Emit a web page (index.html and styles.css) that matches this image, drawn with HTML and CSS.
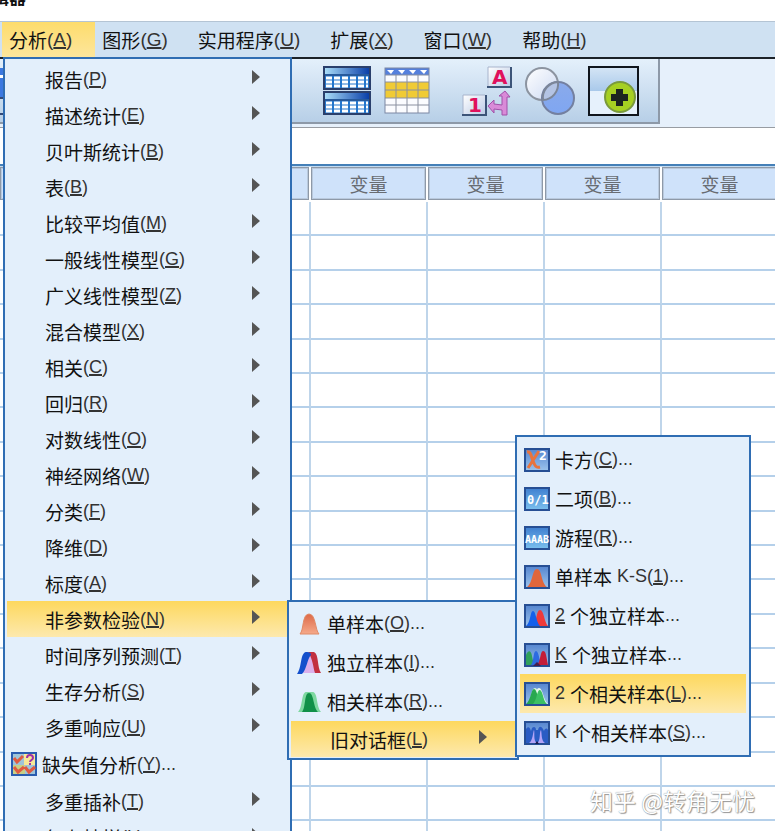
FILE: index.html
```html
<!DOCTYPE html>
<html lang="zh-CN">
<head>
  <meta charset="UTF-8">
  <meta name="viewport" content="width=device-width, initial-scale=1.0">
  <title>数据编辑器</title>
  <link rel="stylesheet" href="styles.css">
</head>
<body>
  <!-- 图标共用的渐变 -->
  <svg class="defs" width="0" height="0" aria-hidden="true">
    <defs>
      <linearGradient id="gBar"><stop offset="0" stop-color="#a9dcf8"/><stop offset="1" stop-color="#0a3fa8"/></linearGradient>
      <linearGradient id="gFrame" x2="0" y2="1"><stop offset="0" stop-color="#5585cf"/><stop offset="1" stop-color="#9cc4ec"/></linearGradient>
      <linearGradient id="gText" x2="0" y2="1"><stop offset="0" stop-color="#3f7fd0"/><stop offset="1" stop-color="#7cc0ee"/></linearGradient>
      <linearGradient id="gOrange" x2="0" y2="1"><stop offset="0" stop-color="#dd6a48"/><stop offset="1" stop-color="#f5a98a"/></linearGradient>
      <linearGradient id="gCard" x2="1" y2="1"><stop offset="0" stop-color="#ffffff"/><stop offset="1" stop-color="#bccbe6"/></linearGradient>
      <linearGradient id="gBall" x2="1" y2="1"><stop offset="0" stop-color="#ffffff"/><stop offset="1" stop-color="#ccd9f2"/></linearGradient>
      <linearGradient id="gBlue" x2="0" y2="1"><stop offset="0" stop-color="#8aaaea"/><stop offset="1" stop-color="#7fa6f2"/></linearGradient>
      <linearGradient id="gPane" x2="0" y2="1"><stop offset="0" stop-color="#d3e4f5"/><stop offset="1" stop-color="#a9c9ea"/></linearGradient>
    </defs>
  </svg>

  <div class="app">
    <header class="titlebar"><span>辑器</span></header>

    <!-- 菜单栏 -->
    <nav class="menubar">
      <button class="menubar-item open">分析<span class="key">(<u>A</u>)</span></button>
      <button class="menubar-item">图形<span class="key">(<u>G</u>)</span></button>
      <button class="menubar-item">实用程序<span class="key">(<u>U</u>)</span></button>
      <button class="menubar-item">扩展<span class="key">(<u>X</u>)</span></button>
      <button class="menubar-item">窗口<span class="key">(<u>W</u>)</span></button>
      <button class="menubar-item">帮助<span class="key">(<u>H</u>)</span></button>

      <!-- 分析菜单 -->
      <ul class="menu menu-main">
        <li><button class="item sub">报告<span class="key">(<u>P</u>)</span></button></li>
        <li><button class="item sub">描述统计<span class="key">(<u>E</u>)</span></button></li>
        <li><button class="item sub">贝叶斯统计<span class="key">(<u>B</u>)</span></button></li>
        <li><button class="item sub">表<span class="key">(<u>B</u>)</span></button></li>
        <li><button class="item sub">比较平均值<span class="key">(<u>M</u>)</span></button></li>
        <li><button class="item sub">一般线性模型<span class="key">(<u>G</u>)</span></button></li>
        <li><button class="item sub">广义线性模型<span class="key">(<u>Z</u>)</span></button></li>
        <li><button class="item sub">混合模型<span class="key">(<u>X</u>)</span></button></li>
        <li><button class="item sub">相关<span class="key">(<u>C</u>)</span></button></li>
        <li><button class="item sub">回归<span class="key">(<u>R</u>)</span></button></li>
        <li><button class="item sub">对数线性<span class="key">(<u>O</u>)</span></button></li>
        <li><button class="item sub">神经网络<span class="key">(<u>W</u>)</span></button></li>
        <li><button class="item sub">分类<span class="key">(<u>F</u>)</span></button></li>
        <li><button class="item sub">降维<span class="key">(<u>D</u>)</span></button></li>
        <li><button class="item sub">标度<span class="key">(<u>A</u>)</span></button></li>
        <li>
          <button class="item sub active">非参数检验<span class="key">(<u>N</u>)</span></button>
          <!-- 非参数检验 -->
          <ul class="menu menu-nonpar">
            <li><button class="item">
              <svg class="icon" width="24" height="24" viewBox="0 0 24 24"><path d="M3 22C7 18 5 2 12 2s6 16 10 20z" fill="url(#gOrange)" stroke="#e08a66"/></svg>
              单样本<span class="key">(<u>O</u>)...</span></button></li>
            <li><button class="item">
              <svg class="icon" width="24" height="24" viewBox="0 0 24 24"><path d="M6 22C9 16 9 5 13 5s4 12 7 17z" fill="#dcb0ea"/><path d="M11 1h6c5 2 3 15 7 21h-6C16 16 16 8 11 1z" fill="#c23040"/><path d="M0 23C5 17 3 2 9 1c4 0 5 1 5 3-4 4-4 14-9 19z" fill="#1450cc"/></svg>
              独立样本<span class="key">(<u>I</u>)...</span></button></li>
            <li><button class="item">
              <svg class="icon" width="24" height="24" viewBox="0 0 24 24"><path d="M1 22C6 17 4 3 9 2h7c5 1 3 14 8 20z" fill="#7ed8a0"/><path d="M5 22C9 17 7 3 12 3s4 14 9 19z" fill="#119048"/></svg>
              相关样本<span class="key">(<u>R</u>)...</span></button></li>
            <li>
              <button class="item sub last active">旧对话框<span class="key">(<u>L</u>)</span></button>
              <!-- 旧对话框 -->
              <ul class="menu menu-legacy">
                <li><button class="item">
                  <svg class="icon" width="26" height="24" viewBox="0 0 26 24"><rect x="1" y="1" width="24" height="22" fill="url(#gFrame)" stroke="#274f94" stroke-width="2"/><path d="M3 4c4-1 4 4 6 9s3 7 7 6M15 3L4 20" stroke="#e8743e" stroke-width="3" fill="none"/><text x="15" y="12" class="icon-text" font-size="13">2</text></svg>
                  卡方<span class="key">(<u>C</u>)...</span></button></li>
                <li><button class="item">
                  <svg class="icon" width="26" height="24" viewBox="0 0 26 24"><rect x="1" y="1" width="24" height="22" fill="url(#gText)" stroke="#274f94" stroke-width="2"/><text x="3" y="17" class="icon-text" font-size="12">0/1</text></svg>
                  二项<span class="key">(<u>B</u>)...</span></button></li>
                <li><button class="item">
                  <svg class="icon" width="26" height="24" viewBox="0 0 26 24"><rect x="1" y="1" width="24" height="22" fill="url(#gText)" stroke="#274f94" stroke-width="2"/><text x="1" y="17" class="icon-text" font-size="10">AAAB</text></svg>
                  游程<span class="key">(<u>R</u>)...</span></button></li>
                <li><button class="item">
                  <svg class="icon" width="26" height="24" viewBox="0 0 26 24"><rect x="1" y="1" width="24" height="22" fill="url(#gFrame)" stroke="#274f94" stroke-width="2"/><path d="M3 22C9 18 8 4 13 4s4 14 10 18z" fill="#e0663c"/></svg>
                  单样本<span class="key"> K-S(<u>1</u>)...</span></button></li>
                <li><button class="item">
                  <svg class="icon" width="26" height="24" viewBox="0 0 26 24"><rect x="1" y="1" width="24" height="22" fill="url(#gFrame)" stroke="#274f94" stroke-width="2"/><path d="M9 22C13 18 12 6 16 6s4 12 8 16z" fill="#ee3a3a"/><path d="M2 22C7 18 6 7 9 7s3 11 7 15z" fill="#1560ea"/></svg>
                  <span class="key"><u>2</u> </span>个独立样本<span class="key">...</span></button></li>
                <li><button class="item">
                  <svg class="icon" width="26" height="24" viewBox="0 0 26 24"><rect x="1" y="1" width="24" height="22" fill="url(#gFrame)" stroke="#274f94" stroke-width="2"/><path d="M2 22V12c2-5 5-5 6 1l2 9z" fill="#2fa05c"/><path d="M7 22C10 18 9 8 12 8s3 10 6 14z" fill="#2c6be0"/><path d="M13 22C17 18 16 8 19 8s3 4 5 14z" fill="#c41d38"/><path d="M9 23l4-4 4 4z" fill="#402050"/></svg>
                  <span class="key"><u>K</u> </span>个独立样本<span class="key">...</span></button></li>
                <li><button class="item active">
                  <svg class="icon" width="26" height="24" viewBox="0 0 26 24"><rect x="1" y="1" width="24" height="22" fill="url(#gFrame)" stroke="#274f94" stroke-width="2"/><path d="M3 22C8 17 7 6 11 6s4 12 8 16z" fill="#d8f4e0"/><path d="M8 22C12 17 11 6 15 6s4 12 9 16z" fill="#e8faec"/><path d="M2 22C7 18 7 7 10 7s4 11 7 15z" fill="#28a850"/><path d="M9 22C13 18 13 7 16 8s3 11 7 14z" fill="#3cc064"/></svg>
                  <span class="key">2 </span>个相关样本<span class="key">(<u>L</u>)...</span></button></li>
                <li><button class="item">
                  <svg class="icon" width="26" height="24" viewBox="0 0 26 24"><rect x="1" y="1" width="24" height="22" fill="url(#gFrame)" stroke="#274f94" stroke-width="2"/><path d="M2 22V8c2-3 4-2 5 2l1-3c2-2 4-1 4 2h2c1-4 3-4 5-1l1 2c1-3 3-3 4-1v13z" fill="#2a5cc4"/><path d="M5 22c4-2 4-12 5-13 1 3-1 11 3 13zM13 22c4-2 2-11 4-13 1 3 0 11 4 13z" fill="#b4a4f6"/><path d="M11 23l2-3 2 3z" fill="#1a1c50"/></svg>
                  <span class="key">K </span>个相关样本<span class="key">(<u>S</u>)...</span></button></li>
              </ul>
            </li>
          </ul>
        </li>
        <li><button class="item sub">时间序列预测<span class="key">(<u>T</u>)</span></button></li>
        <li><button class="item sub">生存分析<span class="key">(<u>S</u>)</span></button></li>
        <li><button class="item sub">多重响应<span class="key">(<u>U</u>)</span></button></li>
        <li><button class="item with-icon">
          <svg class="icon" width="26" height="24" viewBox="0 0 26 24"><rect x="1" y="1" width="24" height="22" fill="#9fc4d8" stroke="#2a5cb0" stroke-width="2"/><rect x="13" y="2" width="11" height="11" fill="#f8e896"/><path d="M2 13h12v9H2z" fill="#c8cf86"/><path d="M3 6l3 4 6-6M3 15l4 5 6-5M14 15l4 5 6-5" stroke="#e05a40" stroke-width="3" fill="none"/><path d="M16 6c0-4 6-4 6 0 0 2-3 2-3 4M19 11v2" stroke="#a030a8" stroke-width="2" fill="none"/></svg>
          缺失值分析<span class="key">(<u>Y</u>)...</span></button></li>
        <li><button class="item sub">多重插补<span class="key">(<u>T</u>)</span></button></li>
        <li><button class="item sub">复杂抽样<span class="key">(<u>L</u>)</span></button></li>
      </ul>
    </nav>

    <!-- 工具栏 -->
    <div class="toolbar">
      <div class="toolbar-inner">
        <button class="tool tool-file" aria-label="打开">
          <svg width="3" height="50" viewBox="0 0 3 50"><path d="M0 2h3v29H0z" fill="#3c78e0"/><path d="M0 9h3v3H0z" fill="#fff"/><path d="M0 31h3v2H0zM0 47h3v2H0z" fill="#334a78"/></svg>
        </button>
        <button class="tool" aria-label="拆分文件">
          <svg width="48" height="50" viewBox="0 0 48 50">
            <g id="splitHalf">
              <rect x="1" y="1" width="46" height="22" fill="#2476cc" stroke="#2a3f6c" stroke-width="2"/>
              <rect x="2" y="2" width="44" height="6" fill="url(#gBar)"/>
              <path d="M2 9h44" stroke="#2a3f6c"/>
              <path d="M3 12h42M3 16h42M3 20h42" stroke="#fff" stroke-width="3" stroke-dasharray="6 2"/>
            </g>
            <use href="#splitHalf" y="25"/>
          </svg>
        </button>
        <button class="tool" aria-label="选择个案">
          <svg width="46" height="50" viewBox="0 0 46 50">
            <rect x="1" y="2" width="44" height="45" fill="#fbfcff"/>
            <rect x="1" y="2" width="44" height="7" fill="#5580dc"/>
            <path d="M3 4h7l-3 4zM14 4h7l-3 4zM25 4h7l-3 4zM36 4h7l-3 4z" fill="#fff"/>
            <rect x="1" y="16" width="44" height="16" fill="#f0cb35"/>
            <path d="M1 9h44M1 16h44M1 24h44M1 32h44M1 39h44M12 9v38M23 9v38M34 9v38" stroke="#8a90a0" fill="none"/>
            <rect x="1" y="2" width="44" height="45" fill="none" stroke="#7c88a4"/>
          </svg>
        </button>
        <button class="tool tool-gap" aria-label="值标签">
          <svg width="50" height="50" viewBox="0 0 50 50">
            <rect x="26" y="1" width="22" height="20" fill="url(#gCard)"/>
            <path d="M26 21V1h22" stroke="#a8b4cc" fill="none"/><path d="M25 21h24V1" stroke="#3c5478" stroke-width="2" fill="none"/>
            <text x="30" y="18" class="card-text">A</text>
            <rect x="1" y="29" width="22" height="20" fill="url(#gCard)"/>
            <path d="M1 49V29h22" stroke="#a8b4cc" fill="none"/><path d="M0 49h24V29" stroke="#3c5478" stroke-width="2" fill="none"/>
            <text x="6" y="46" class="card-text">1</text>
            <path d="M43 25l5 6h-3v18h-5v-5l-8-1v4l-6-7 6-6v4l8 1v-9h-3z" fill="#d98ad8" stroke="#a050a8"/>
          </svg>
        </button>
        <button class="tool" aria-label="使用变量集">
          <svg width="50" height="50" viewBox="0 0 50 50">
            <circle cx="17" cy="18" r="16" fill="url(#gBall)" stroke="#8c94a0" stroke-width="2"/>
            <circle cx="33" cy="32" r="16" fill="url(#gBlue)" stroke="#7480a0" stroke-width="2"/>
            <path d="M18 34a16 16 0 0 1 15-18 16 16 0 0 1-15 18z" fill="#b4c4e4" stroke="#7c8698" stroke-width="2"/>
          </svg>
        </button>
        <button class="tool" aria-label="显示所有变量">
          <svg width="51" height="50" viewBox="0 0 51 50">
            <rect x="1" y="1" width="49" height="48" fill="#e6f1fc" stroke="#10151c" stroke-width="2"/>
            <rect x="2" y="2" width="47" height="23" fill="url(#gPane)"/>
            <circle cx="32" cy="31" r="15" fill="#a6d022" stroke="#7a9a3c" stroke-width="2"/>
            <path d="M28 23h7v5h5v7h-5v5h-7v-5h-5v-7h5z" fill="#1c2420"/>
          </svg>
        </button>
      </div>
    </div>

    <div class="cellbar"></div>

    <!-- 数据表 -->
    <main class="sheet">
      <table>
        <thead>
          <tr><th class="col-first"><span></span></th><th><span>变量</span></th><th><span>变量</span></th><th><span>变量</span></th><th><span>变量</span></th></tr>
        </thead>
        <tbody id="rows"></tbody>
      </table>
    </main>

    <div class="watermark">知乎 @转角无忧</div>
  </div>

  <script>
    // 填充空白数据行
    const rows = document.getElementById('rows');
    for (let i = 0; i < 19; i++) {
      rows.insertAdjacentHTML('beforeend', '<tr><td></td><td></td><td></td><td></td><td></td></tr>');
    }
  </script>
</body>
</html>
```
FILE: styles.css
```css
* {
  box-sizing: border-box;
}

body {
  margin: 0;
  background: #fff;
  color: #111;
  font-family: "Noto Sans CJK SC", "Liberation Sans", sans-serif;
  font-size: 19px;
}

button {
  border: none;
  background: none;
  padding: 0;
  color: inherit;
  font: inherit;
  text-align: left;
  white-space: nowrap;
}

.defs {
  position: absolute;
}

.app {
  position: relative;
  display: flex;
  flex-direction: column;
  height: 100vh;
  overflow: hidden;
}

/* 标题栏 */
.titlebar {
  height: 21px;
  flex: none;
  font-size: 17px;
  font-weight: bold;
  line-height: 17px;
}

.titlebar span {
  display: block;
  margin: -12px 0 0 -8px;
}

/* 菜单栏 */
.menubar {
  position: relative;
  z-index: 2;
  display: flex;
  flex: none;
  height: 36px;
  padding-left: 2px;
  background: #cfe1f2;
  border-top: 1px solid #b4c4d4;
}

.menubar-item {
  display: flex;
  align-items: center;
  padding: 0 23px 0 7px;
}

.menubar-item.open {
  background: linear-gradient(#fddc6c, #fde69c);
}

.key {
  font-family: "Liberation Sans", sans-serif;
  font-size: 18px;
  color: #333;
  white-space: pre;
}

.menubar-item .key {
  font-size: 19px;
}

.key u {
  text-decoration-thickness: 2px;
  text-underline-offset: 1px;
}

/* 下拉菜单 */
.menu {
  position: absolute;
  margin: 0;
  padding: 3px 2px;
  list-style: none;
  background: #e3effb;
  border: 2px solid #2f6db3;
}

.menu li {
  position: relative;
}

.menu-main {
  top: 100%;
  left: 3px;
  width: 289px;
  padding-top: 2px;
}

.menu-nonpar {
  top: -1px;
  left: 100%;
  width: 232px;
  margin-left: -1px;
  padding: 2px 2px 1px;
}

.menu-legacy {
  bottom: 0;
  left: 100%;
  width: 236px;
  padding: 3px;
}

.item {
  display: flex;
  align-items: center;
  width: 100%;
  height: 36px;
  padding-left: 38px;
}

.item.with-icon {
  height: 38px;
  padding-left: 4px;
}

.with-icon .icon {
  margin-right: 5px;
}

.menu-nonpar .item {
  height: 39px;
  padding-left: 6px;
}

.menu-nonpar .icon {
  margin-right: 6px;
}

.menu-nonpar .item.last {
  height: 36px;
  padding-left: 39px;
}

.menu-legacy .item {
  padding-left: 4px;
}

.menu-legacy .icon {
  margin-right: 5px;
}

.item.active {
  background: linear-gradient(#fdd85e, #fde9ad);
}

/* 子菜单箭头 */
.sub::after {
  content: "";
  margin: 0 28px 4px auto;
  border: solid transparent;
  border-width: 7px 0 7px 8px;
  border-left-color: #555;
}

.icon {
  flex: none;
}

.icon-text {
  fill: #fff;
  font-family: "DejaVu Sans Mono", monospace;
  font-weight: bold;
}

.card-text {
  fill: #e0105c;
  font: bold 20px "DejaVu Sans", sans-serif;
}

/* 工具栏 */
.toolbar {
  display: flex;
  flex: none;
  height: 71px;
  padding-bottom: 3px;
  background: #e6f0fb;
  border-top: 2px solid #1c2228;
  border-bottom: 1px solid #989ca2;
}

.toolbar-inner {
  display: flex;
  align-items: center;
  gap: 13px;
  width: 660px;
  background: linear-gradient(#e4f0fb, #b7cfe7);
  border: solid #8d99a8;
  border-width: 0 2px 2px 0;
}

.tool {
  flex: none;
  line-height: 0;
}

.tool-file {
  margin-right: 307px;
}

.tool-gap {
  margin-left: 19px;
}

.cellbar {
  flex: none;
  height: 36px;
}

/* 数据表 */
.sheet {
  flex: none;
  border-top: 2px solid #4580b8;
}

.sheet table {
  width: 779px;
  height: calc(100vh + 24px - 165px);
  table-layout: fixed;
  border-collapse: separate;
  border-spacing: 0;
}

.sheet th {
  height: 36px;
  padding: 0 2px 2px 0;
  background: #fff;
  border-top: 1px solid #c4dcf2;
  color: #686c72;
  font-weight: normal;
}

.sheet th span {
  display: block;
  height: 33px;
  line-height: 31px;
  background: #cfe2fa;
  border: 1px solid #8e99a8;
  box-shadow: inset 0 0 0 1px #b9c9dd;
}

.sheet .col-first {
  width: 311px;
}

.sheet td {
  padding: 0;
  border-right: 2px solid #bfd5ea;
  border-bottom: 2px solid #b5d0ea;
}

/* 水印 */
.watermark {
  position: absolute;
  right: 20px;
  bottom: 14px;
  color: #fff;
  font-size: 23px;
  text-shadow: 0 0 1px #777, 1px 1px 1px #999;
}
```
